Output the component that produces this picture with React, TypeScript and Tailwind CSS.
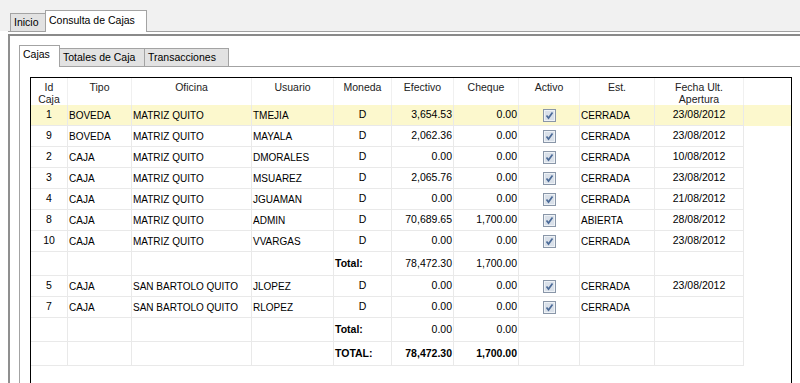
import React from "react";

type Row = {
  id?: string;
  tipo?: string;
  oficina?: string;
  usuario?: string;
  moneda?: string;
  efectivo: string;
  cheque: string;
  activo?: boolean;
  est?: string;
  fecha?: string;
  highlight?: boolean;
  total?: "sub" | "grand";
  label?: string;
};

const rows: Row[] = [
  { id: "1", tipo: "BOVEDA", oficina: "MATRIZ QUITO", usuario: "TMEJIA", moneda: "D", efectivo: "3,654.53", cheque: "0.00", activo: true, est: "CERRADA", fecha: "23/08/2012", highlight: true },
  { id: "9", tipo: "BOVEDA", oficina: "MATRIZ QUITO", usuario: "MAYALA", moneda: "D", efectivo: "2,062.36", cheque: "0.00", activo: true, est: "CERRADA", fecha: "23/08/2012" },
  { id: "2", tipo: "CAJA", oficina: "MATRIZ QUITO", usuario: "DMORALES", moneda: "D", efectivo: "0.00", cheque: "0.00", activo: true, est: "CERRADA", fecha: "10/08/2012" },
  { id: "3", tipo: "CAJA", oficina: "MATRIZ QUITO", usuario: "MSUAREZ", moneda: "D", efectivo: "2,065.76", cheque: "0.00", activo: true, est: "CERRADA", fecha: "23/08/2012" },
  { id: "4", tipo: "CAJA", oficina: "MATRIZ QUITO", usuario: "JGUAMAN", moneda: "D", efectivo: "0.00", cheque: "0.00", activo: true, est: "CERRADA", fecha: "21/08/2012" },
  { id: "8", tipo: "CAJA", oficina: "MATRIZ QUITO", usuario: "ADMIN", moneda: "D", efectivo: "70,689.65", cheque: "1,700.00", activo: true, est: "ABIERTA", fecha: "28/08/2012" },
  { id: "10", tipo: "CAJA", oficina: "MATRIZ QUITO", usuario: "VVARGAS", moneda: "D", efectivo: "0.00", cheque: "0.00", activo: true, est: "CERRADA", fecha: "23/08/2012" },
  { total: "sub", label: "Total:", efectivo: "78,472.30", cheque: "1,700.00" },
  { id: "5", tipo: "CAJA", oficina: "SAN BARTOLO QUITO", usuario: "JLOPEZ", moneda: "D", efectivo: "0.00", cheque: "0.00", activo: true, est: "CERRADA", fecha: "23/08/2012" },
  { id: "7", tipo: "CAJA", oficina: "SAN BARTOLO QUITO", usuario: "RLOPEZ", moneda: "D", efectivo: "0.00", cheque: "0.00", activo: true, est: "CERRADA", fecha: "" },
  { total: "sub", label: "Total:", efectivo: "0.00", cheque: "0.00" },
  { total: "grand", label: "TOTAL:", efectivo: "78,472.30", cheque: "1,700.00" },
];

const cols = "grid grid-cols-[37px_64px_120px_82px_58px_62px_65px_61px_75px_89px]";
const cell = "border-r border-b border-[#e9e9e9] flex items-center overflow-hidden whitespace-nowrap";
const hcell = "border-r border-[#f0f0f0] text-center leading-[12px] pt-[3px] text-[#222]";

const Check = () => (
  <svg width="13" height="13" viewBox="0 0 13 13">
    <rect x="0.5" y="0.5" width="12" height="12" fill="#d9e0e9" stroke="#8996a8" />
    <rect x="1.5" y="1.5" width="10" height="10" fill="none" stroke="#eef2f6" />
    <path d="M3.5 6.5 L5.5 9 L9.5 3.5" fill="none" stroke="#4c6b98" strokeWidth="1.7" />
  </svg>
);

const App: React.FC = () => {
  return (
    <div className="w-[800px] h-[383px] overflow-hidden bg-white font-['Liberation_Sans',Arial,sans-serif] text-[10.5px] text-black">
      {/* outer tab strip */}
      <div className="h-[31px] bg-[#f1f1f1] flex items-end pl-[10px]">
        <div className="h-[18px] w-[35px] px-[3px] flex items-center bg-[#e2e2e2] border-t border-l border-[#a3a3a3]">Inicio</div>
        <div className="h-[22px] mb-[-1px] px-[3px] pb-[2px] flex items-center bg-white border-t border-l border-r border-[#a3a3a3] w-[102px] relative z-10">
          Consulta de Cajas
        </div>
      </div>

      {/* outer panel */}
      <div className="ml-[8px] border-t border-[#a0a0a0] w-[900px]">
        <div className="mt-[2px] border-t-2 border-[#8a8a8a]">
          <div className="border-l-2 border-[#8f8f8f] h-[360px] pl-[9px] pt-[9px]">
            {/* inner tabs */}
            <div className="flex items-end h-[21px]">
              <div className="h-[22px] w-[41px] mb-[-1px] pl-[3px] pb-[3px] flex items-center bg-white border-t border-l border-r border-[#a3a3a3] relative z-10">
                Cajas
              </div>
              <div className="h-[18px] w-[85px] pl-[3px] flex items-center bg-[#e2e2e2] border-t border-r border-[#a3a3a3]">Totales de Caja</div>
              <div className="h-[18px] w-[84px] pl-[3px] flex items-center bg-[#e2e2e2] border-t border-r border-[#a3a3a3]">Transacciones</div>
            </div>

            {/* inner panel */}
            <div className="border-t border-l border-[#a3a3a3] h-[330px] pl-[10px] pt-[10px]">
              <div className="w-[762px] h-[320px] border-t border-l border-r border-black">
                {/* header */}
                <div className={`${cols} h-[27px]`}>
                  <div className={hcell}>Id<br />Caja</div>
                  <div className={hcell}>Tipo</div>
                  <div className={hcell}>Oficina</div>
                  <div className={hcell}>Usuario</div>
                  <div className={hcell}>Moneda</div>
                  <div className={hcell}>Efectivo</div>
                  <div className={hcell}>Cheque</div>
                  <div className={hcell}>Activo</div>
                  <div className={hcell}>Est.</div>
                  <div className={hcell}>Fecha Ult.<br />Apertura</div>
                </div>

                {/* rows */}
                {rows.map((r, i) => {
                  const bg = r.highlight ? "bg-[#fcf8cd]" : "";
                  const h = r.total ? "h-[24px]" : "h-[21px]";
                  const boldVals = r.total === "grand" ? "font-bold" : "";
                  return (
                    <div key={i} className={`${cols} ${h} ${bg}`}>
                      <div className={`${cell} justify-center`}>{r.id}</div>
                      <div className={`${cell} pl-px text-[10px]`}>{r.tipo}</div>
                      <div className={`${cell} pl-px text-[10px]`}>{r.oficina}</div>
                      <div className={`${cell} pl-px text-[10px]`}>{r.usuario}</div>
                      <div className={`${cell} ${r.total ? "pl-px font-bold" : "justify-center"}`}>
                        {r.total ? r.label : r.moneda}
                      </div>
                      <div className={`${cell} justify-end pr-px ${boldVals}`}>{r.efectivo}</div>
                      <div className={`${cell} justify-end pr-px ${boldVals}`}>{r.cheque}</div>
                      <div className={`${cell} justify-center`}>{r.activo && <Check />}</div>
                      <div className={`${cell} pl-px text-[10px]`}>{r.est}</div>
                      <div className={`${cell} justify-center`}>{r.fecha}</div>
                    </div>
                  );
                })}
              </div>
            </div>
          </div>
        </div>
      </div>
    </div>
  );
};

export default App;
